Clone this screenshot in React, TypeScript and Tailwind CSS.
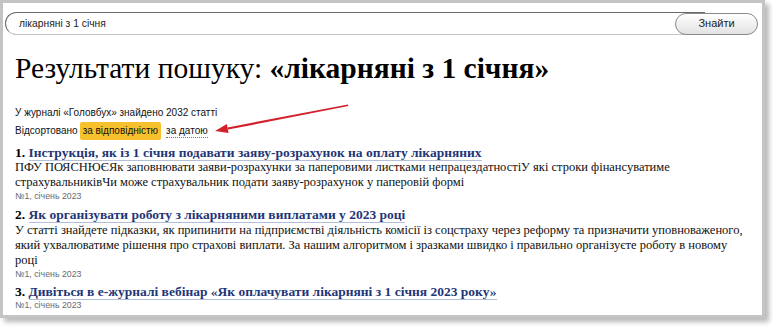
import React from "react";

const serif = { fontFamily: '"Liberation Serif", "DejaVu Serif", serif' };
const sans = { fontFamily: '"Liberation Sans", Arial, sans-serif' };

function Title({ n, text }: { n: number; text: string }) {
  return (
    <div className="text-[13.5px] leading-[15px] font-bold text-black whitespace-nowrap" style={serif}>
      {n}.{" "}
      <span className="text-[#1f3677] border-b border-[#b3bfd8]">{text}</span>
    </div>
  );
}

function Meta() {
  return (
    <div className="text-[8.8px] leading-[12px] text-[#6a6a6a]" style={sans}>
      №1, січень 2023
    </div>
  );
}

export default function App() {
  return (
    <div className="w-[773px] h-[327px] bg-white overflow-hidden">
      <div className="w-[765px] h-[318px] border-[3px] border-[#c4c4c4] bg-white shadow-[4px_4px_5px_rgba(0,0,0,0.28)] flex flex-col">
        <div className="flex items-center pt-[9px] pl-[2px]">
          <div
            className="w-[700px] h-[23px] rounded-l-full border border-[#6b6b6b] border-b-[#c8c8c8] border-r-0 flex items-center pl-[13px] text-[10.3px] text-[#222]"
            style={sans}
          >
            лікарняні з 1 січня
          </div>
          <div
            className="-ml-[30px] w-[83px] h-[22px] rounded-full border border-[#8a8a8a] bg-gradient-to-b from-white to-[#e2e2e2] flex items-center justify-center text-[11px] text-[#222]"
            style={sans}
          >
            Знайти
          </div>
        </div>

        <div className="pl-[12px] pr-[8px] flex flex-col">
          <h1 className="mt-[15px] text-[29.5px] leading-[36px] text-black whitespace-nowrap" style={serif}>
            Результати пошуку: <span className="font-bold">«лікарняні з 1 січня»</span>
          </h1>

          <div className="mt-[20px] text-[10px] leading-[14px] text-[#111]" style={sans}>
            У журналі «Головбух» знайдено 2032 статті
          </div>

          <div className="mt-[2px] flex items-center text-[10px] leading-[14px] text-[#111] relative" style={sans}>
            <span>Відсортовано</span>
            <span className="ml-[2px] bg-[#f7c12d] px-[3px] py-[2px] rounded-[2px]">за відповідністю</span>
            <span className="ml-[5px] border-b border-dotted border-[#777] leading-[12px]">за датою</span>
            <svg className="absolute left-[190px] top-[-24px]" width="160" height="40" viewBox="0 0 160 40">
              <path d="M143 6.4 L143.4 8 L23.2 31.6 L22.6 29.4 Z" fill="#d4202c" />
              <path d="M10 33 L23.6 34.9 L21.9 26.1 Z" fill="#d4202c" />
            </svg>
          </div>

          <div className="mt-[5px]">
            <Title n={1} text="Інструкція, як із 1 січня подавати заяву-розрахунок на оплату лікарняних" />
            <div className="text-[12.5px] leading-[15px] text-[#111] whitespace-nowrap" style={serif}>
              ПФУ ПОЯСНЮЄЯк заповнювати заяви-розрахунки за паперовими листками непрацездатностіУ які строки фінансуватиме
              <br />
              страхувальниківЧи може страхувальник подати заяву-розрахунок у паперовій формі
            </div>
            <Meta />
          </div>

          <div className="mt-[5px]">
            <Title n={2} text="Як організувати роботу з лікарняними виплатами у 2023 році" />
            <div className="mt-[1px] text-[12.5px] leading-[15px] text-[#111] whitespace-nowrap" style={serif}>
              У статті знайдете підказки, як припинити на підприємстві діяльність комісії із соцстраху через реформу та призначити уповноваженого,
              <br />
              який ухвалюватиме рішення про страхові виплати. За нашим алгоритмом і зразками швидко і правильно організуєте роботу в новому
              <br />
              <span className="leading-[13px]">році</span>
            </div>
            <Meta />
          </div>

          <div className="mt-[4px]">
            <Title n={3} text="Дивіться в е-журналі вебінар «Як оплачувати лікарняні з 1 січня 2023 року»" />
            <Meta />
          </div>
        </div>
      </div>
    </div>
  );
}
